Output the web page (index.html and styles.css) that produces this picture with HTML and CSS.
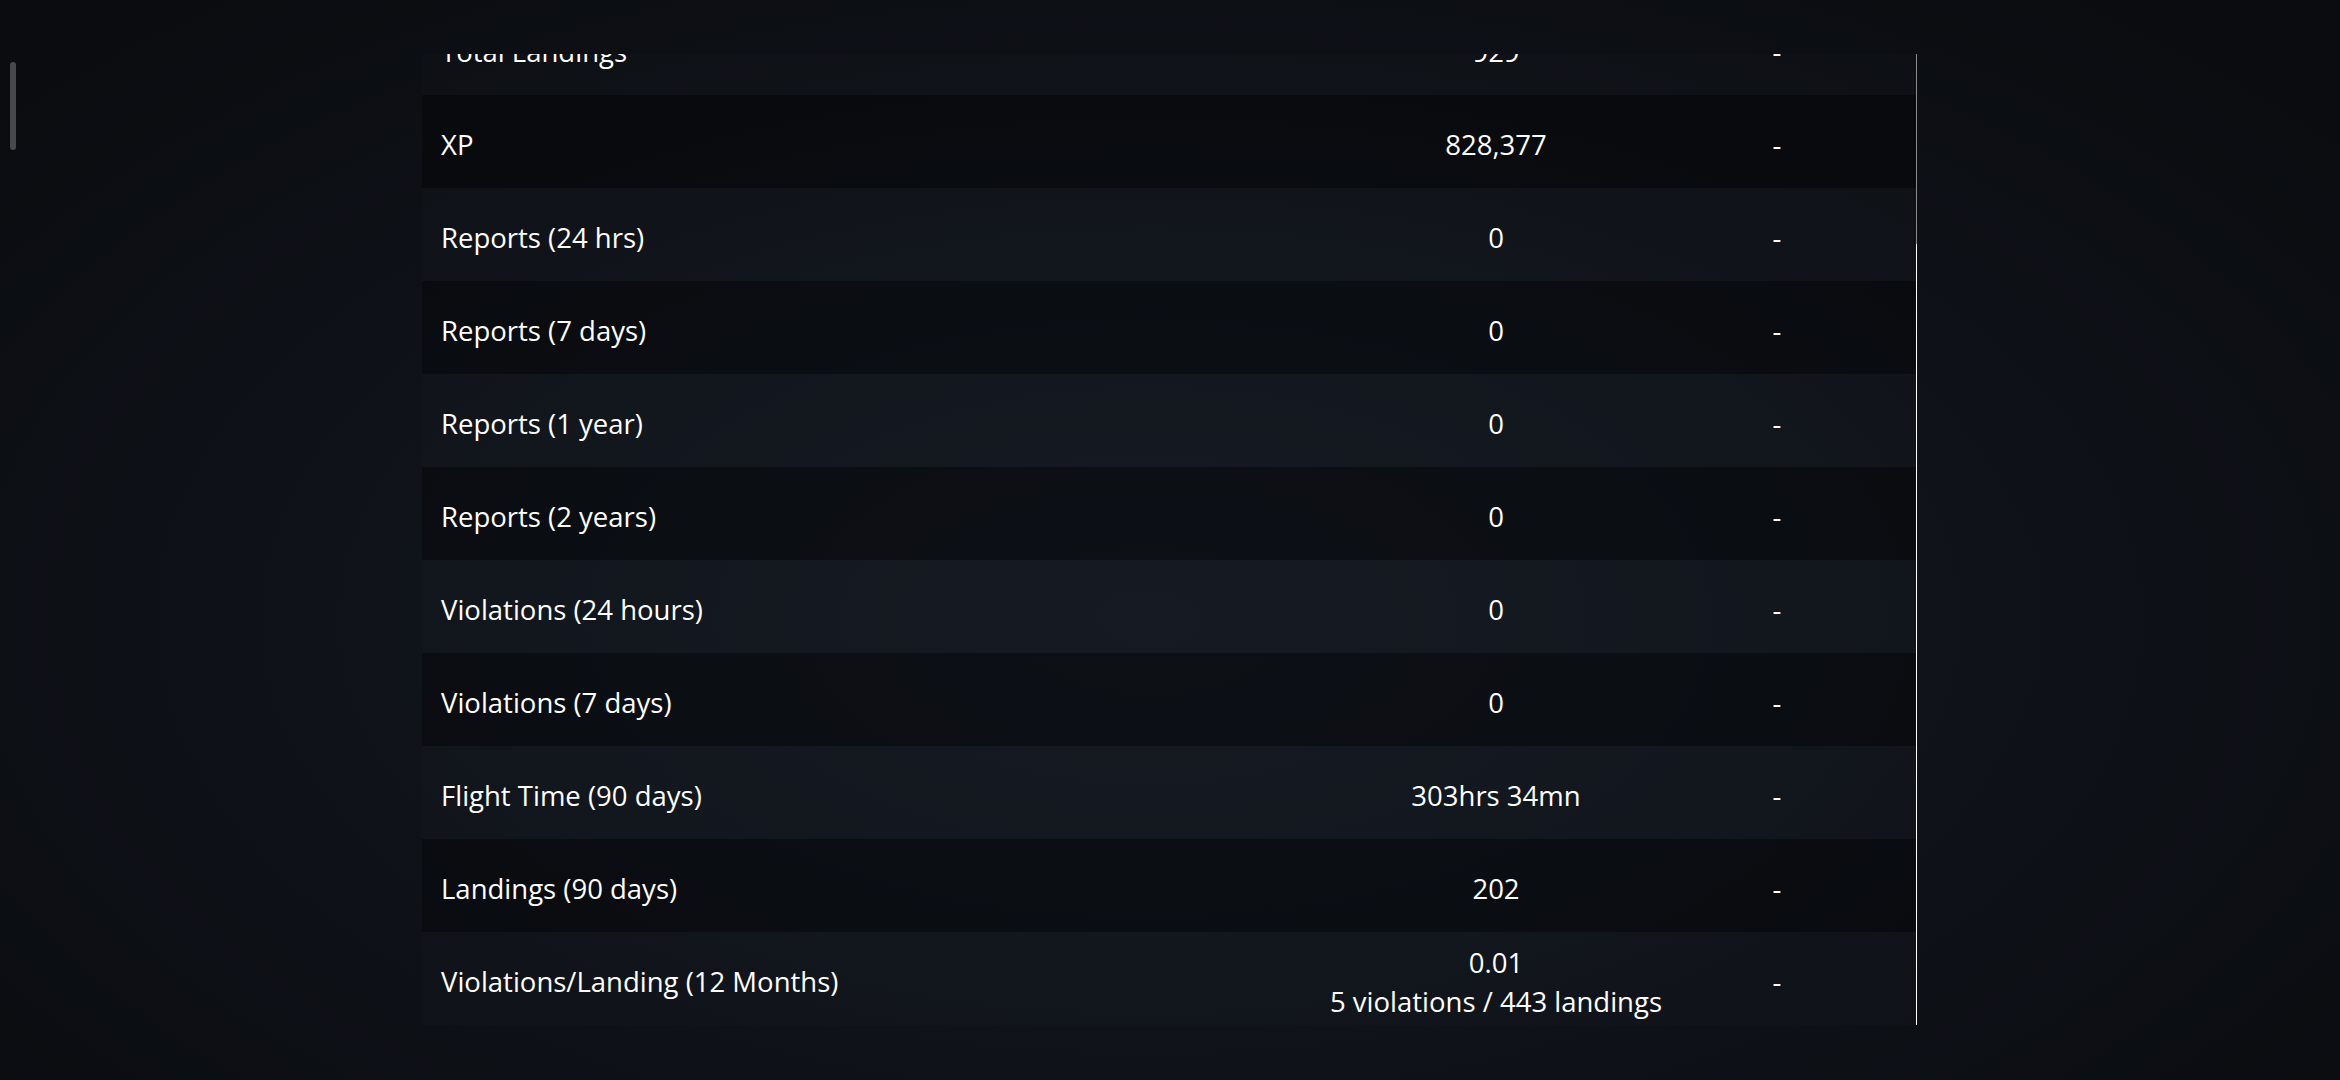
FILE: index.html
```html
<!DOCTYPE html>
<html lang="en">
<head>
<meta charset="utf-8">
<title>Pilot Stats</title>
<link rel="stylesheet" href="styles.css">
</head>
<body>
<div class="page-indicator"></div>
<main class="stage">
  <section class="panel">
    <div class="scroll">
      <div class="stats">
        <div class="row light"><div class="label">Total Landings</div><div class="value">929</div><div class="extra">-</div></div>
        <div class="row dark"><div class="label">XP</div><div class="value">828,377</div><div class="extra">-</div></div>
        <div class="row light"><div class="label">Reports (24 hrs)</div><div class="value">0</div><div class="extra">-</div></div>
        <div class="row dark"><div class="label">Reports (7 days)</div><div class="value">0</div><div class="extra">-</div></div>
        <div class="row light"><div class="label">Reports (1 year)</div><div class="value">0</div><div class="extra">-</div></div>
        <div class="row dark"><div class="label">Reports (2 years)</div><div class="value">0</div><div class="extra">-</div></div>
        <div class="row light"><div class="label">Violations (24 hours)</div><div class="value">0</div><div class="extra">-</div></div>
        <div class="row dark"><div class="label">Violations (7 days)</div><div class="value">0</div><div class="extra">-</div></div>
        <div class="row light"><div class="label">Flight Time (90 days)</div><div class="value">303hrs 34mn</div><div class="extra">-</div></div>
        <div class="row dark"><div class="label">Landings (90 days)</div><div class="value">202</div><div class="extra">-</div></div>
        <div class="row light"><div class="label">Violations/Landing (12 Months)</div><div class="value"><span>0.01</span><span>5 violations / 443 landings</span></div><div class="extra">-</div></div>
      </div>
    </div>
    <div class="scrollbar"></div>
  </section>
</main>
</body>
</html>
```

FILE: styles.css
```css
html, body {
  margin: 0;
  padding: 0;
  width: 2340px;
  height: 1080px;
  overflow: hidden;
}

body {
  background: radial-gradient(ellipse 1500px 800px at 1150px 620px, #141921 0%, #10141b 45%, #0a0c10 100%);
  color: #ffffff;
  font-family: "Open Sans", "Noto Sans", sans-serif;
  font-size: 27.5px;
  line-height: 39px;
}

.page-indicator {
  position: fixed;
  left: 10px;
  top: 62px;
  width: 6px;
  height: 88px;
  border-radius: 3px;
  background: #46494e;
}

.stage {
  display: flex;
  padding: 54px 0 0 422px;
}

.panel {
  display: flex;
  width: 1495px;
  height: 971px;
}

.scroll {
  width: 1494px;
  height: 971px;
  overflow: hidden;
}

.stats {
  margin-top: -52px;
}

.row {
  box-sizing: border-box;
  display: grid;
  grid-template-columns: 932px 284px 278px;
  align-items: center;
  height: 93px;
  padding-top: 6px;
}

.row.light {
  background: rgba(255, 255, 255, 0.012);
}

.row.dark {
  background: rgba(0, 0, 0, 0.32);
}

.label {
  padding-left: 19px;
  white-space: nowrap;
}

.value,
.extra {
  display: flex;
  flex-direction: column;
  align-items: center;
  white-space: nowrap;
}

.scrollbar {
  width: 1px;
  height: 971px;
  background: linear-gradient(to bottom, #8a8a8a 0, #8a8a8a 190px, #ffffff 190px, #ffffff 100%);
}
```
